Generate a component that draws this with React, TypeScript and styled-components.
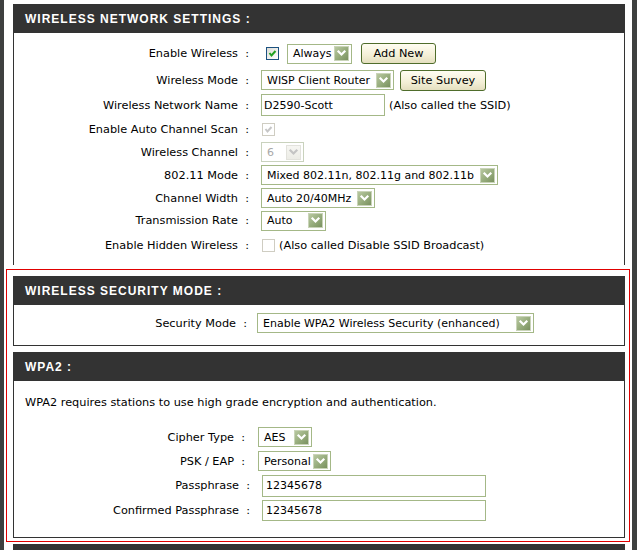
import React, { FC, ReactNode } from 'react'
import styled, { createGlobalStyle } from 'styled-components'

const GlobalStyle = createGlobalStyle`
  html, body {
    margin: 0;
    padding: 0;
    background: #3e403f;
  }
  body {
    font-family: "DejaVu Sans", Verdana, sans-serif;
    font-size: 11.3px;
    color: #000;
  }
`

const Page = styled.div`
  width: 628px;
  min-height: 550px;
  margin-left: 4px;
  padding: 4px 7px 0 9px;
  box-sizing: border-box;
  background: #fff;
  overflow: hidden;
`

const Box = styled.section<{ $open?: boolean; $top?: number }>`
  border: 1px solid #333;
  border-bottom: ${p => (p.$open ? 'none' : '1px solid #333')};
  margin-top: ${p => p.$top ?? 0}px;
  background: #fff;
`

const Header = styled.h2`
  margin: 0;
  height: 28px;
  line-height: 28px;
  padding-left: 11px;
  background: #333333;
  color: #fff;
  font-family: "Liberation Sans", Arial, sans-serif;
  font-size: 12px;
  font-weight: 700;
  letter-spacing: 1px;
`

const Content = styled.div<{ $pt: number; $pb: number }>`
  padding: ${p => p.$pt}px 0 ${p => p.$pb}px;
`

const SecurityFrame = styled.div`
  margin: 4px -5px 0 -7px;
  padding: 6px 4px 3px 6px;
  border: 1px solid #e00000;
`

const Row = styled.div<{ $h: number; $lw?: number; $gap?: number }>`
  display: grid;
  grid-template-columns: ${p => p.$lw ?? 235}px 1fr;
  column-gap: ${p => p.$gap ?? 12}px;
  align-items: center;
  height: ${p => p.$h}px;
`

const Label = styled.div`
  text-align: right;
  white-space: nowrap;
`

const Controls = styled.div`
  display: flex;
  align-items: center;
  white-space: nowrap;
`

const Note = styled.span`
  margin-left: 4px;
`

const Intro = styled.p`
  margin: 0 0 14px 11px;
  line-height: 16px;
`

const SelectBox = styled.div<{ $w: number; $disabled?: boolean; $ml?: number }>`
  display: inline-flex;
  align-items: center;
  justify-content: space-between;
  box-sizing: border-box;
  width: ${p => p.$w}px;
  height: 20px;
  margin-left: ${p => p.$ml ?? 0}px;
  padding-left: 5px;
  padding-right: 2px;
  border: 1px solid ${p => (p.$disabled ? '#c9d2bd' : '#a4b887')};
  background: #fff;
  font-size: 11px;
  color: ${p => (p.$disabled ? '#a8a8a8' : '#000')};
`

const ArrowBox = styled.span<{ $disabled?: boolean }>`
  display: inline-flex;
  align-items: center;
  justify-content: center;
  box-sizing: border-box;
  flex: none;
  width: 15px;
  height: 15px;
  border: 1px solid ${p => (p.$disabled ? '#e2e2dc' : '#c9d4b8')};
  background: ${p =>
    p.$disabled
      ? 'linear-gradient(#f6f6f2, #ecece6)'
      : 'linear-gradient(135deg, #b8c8a0 0%, #95ab7b 55%, #7a915f 100%)'};
`

const Arrow: FC<{ disabled?: boolean }> = ({ disabled }) => (
  <ArrowBox $disabled={disabled}>
    <svg width="11" height="11" viewBox="0 0 11 11">
      <polyline
        points="2.5,3.5 5.5,6.5 8.5,3.5"
        fill="none"
        stroke={disabled ? '#c4c4c4' : '#fff'}
        strokeWidth="2.2"
        strokeLinecap="square"
      />
    </svg>
  </ArrowBox>
)

const Select: FC<{ w: number; disabled?: boolean; ml?: number; children: ReactNode }> = ({
  w,
  disabled,
  ml,
  children,
}) => (
  <SelectBox $w={w} $disabled={disabled} $ml={ml}>
    <span>{children}</span>
    <Arrow disabled={disabled} />
  </SelectBox>
)

const Button = styled.button<{ $w: number; $ml: number }>`
  width: ${p => p.$w}px;
  height: 21px;
  margin-left: ${p => p.$ml}px;
  padding: 0;
  border: 1px solid #4f6d2b;
  border-radius: 3px;
  background: linear-gradient(#fffdf2, #f3efd6 60%, #e4dfbf);
  font-family: "DejaVu Sans", Verdana, sans-serif;
  font-size: 11.3px;
  color: #000;
`

const TextInput = styled.div<{ $w: number; $h: number; $pl: number }>`
  display: inline-flex;
  align-items: center;
  box-sizing: border-box;
  width: ${p => p.$w}px;
  height: ${p => p.$h}px;
  padding-left: ${p => p.$pl}px;
  border: 1px solid #a4b887;
  background: #fff;
  font-size: 11px;
`

const CheckBox = styled.span<{ $disabled?: boolean; $ml: number }>`
  display: inline-flex;
  box-sizing: border-box;
  width: 13px;
  height: 13px;
  margin-left: ${p => p.$ml}px;
  border: 1px solid ${p => (p.$disabled ? '#cfcdc2' : '#1c5180')};
  background: ${p => (p.$disabled ? '#fff' : 'linear-gradient(135deg, #dcdcd6, #fff)')};
`

const Check: FC<{ checked?: boolean; disabled?: boolean; ml?: number }> = ({ checked, disabled, ml = 1 }) => (
  <CheckBox $disabled={disabled} $ml={ml}>
    {checked && (
      <svg width="11" height="11" viewBox="0 0 11 11">
        <polyline
          points="2.5,5 4.5,7.5 8.5,3"
          fill="none"
          stroke={disabled ? '#c6c6c6' : '#21a121'}
          strokeWidth="2"
        />
      </svg>
    )}
  </CheckBox>
)

export default function App() {
  return (
    <>
      <GlobalStyle />
      <Page>
        <Box $open>
          <Header>WIRELESS NETWORK SETTINGS :</Header>
          <Content $pt={7} $pb={7}>
            <Row $h={27}>
              <Label>Enable Wireless&nbsp; :</Label>
              <Controls>
                <Check checked ml={5} />
                <Select w={65} ml={8}>Always</Select>
                <Button $w={75} $ml={9}>Add New</Button>
              </Controls>
            </Row>
            <Row $h={26}>
              <Label>Wireless Mode&nbsp; :</Label>
              <Controls>
                <Select w={133}>WISP Client Router</Select>
                <Button $w={86} $ml={6}>Site Survey</Button>
              </Controls>
            </Row>
            <Row $h={24}>
              <Label>Wireless Network Name&nbsp; :</Label>
              <Controls>
                <TextInput $w={124} $h={22} $pl={2}>D2590-Scott</TextInput>
                <Note>(Also called the SSID)</Note>
              </Controls>
            </Row>
            <Row $h={24}>
              <Label>Enable Auto Channel Scan&nbsp; :</Label>
              <Controls>
                <Check checked disabled />
              </Controls>
            </Row>
            <Row $h={22}>
              <Label>Wireless Channel&nbsp; :</Label>
              <Controls>
                <Select w={43} disabled>6</Select>
              </Controls>
            </Row>
            <Row $h={24}>
              <Label>802.11 Mode&nbsp; :</Label>
              <Controls>
                <Select w={237}>Mixed 802.11n, 802.11g and 802.11b</Select>
              </Controls>
            </Row>
            <Row $h={22}>
              <Label>Channel Width&nbsp; :</Label>
              <Controls>
                <Select w={114}>Auto 20/40MHz</Select>
              </Controls>
            </Row>
            <Row $h={23}>
              <Label>Transmission Rate&nbsp; :</Label>
              <Controls>
                <Select w={65}>Auto</Select>
              </Controls>
            </Row>
            <Row $h={26}>
              <Label>Enable Hidden Wireless&nbsp; :</Label>
              <Controls>
                <Check disabled />
                <Note>(Also called Disable SSID Broadcast)</Note>
              </Controls>
            </Row>
          </Content>
        </Box>

        <SecurityFrame>
          <Box>
            <Header>WIRELESS SECURITY MODE :</Header>
            <Content $pt={6} $pb={10}>
              <Row $h={24} $lw={233} $gap={10}>
                <Label>Security Mode&nbsp; :</Label>
                <Controls>
                  <Select w={277}>Enable WPA2 Wireless Security (enhanced)</Select>
                </Controls>
              </Row>
            </Content>
          </Box>

          <Box $top={6}>
            <Header>WPA2 :</Header>
            <Content $pt={14} $pb={15}>
              <Intro>WPA2 requires stations to use high grade encryption and authentication.</Intro>
              <Row $h={24} $lw={231} $gap={13}>
                <Label>Cipher Type&nbsp; :</Label>
                <Controls>
                  <Select w={54}>AES</Select>
                </Controls>
              </Row>
              <Row $h={24} $lw={231} $gap={13}>
                <Label>PSK / EAP&nbsp; :</Label>
                <Controls>
                  <Select w={73}>Personal</Select>
                </Controls>
              </Row>
              <Row $h={25} $lw={236} $gap={12}>
                <Label>Passphrase&nbsp; :</Label>
                <Controls>
                  <TextInput $w={224} $h={22} $pl={3}>12345678</TextInput>
                </Controls>
              </Row>
              <Row $h={24} $lw={236} $gap={12}>
                <Label>Confirmed Passphrase&nbsp; :</Label>
                <Controls>
                  <TextInput $w={224} $h={21} $pl={3}>12345678</TextInput>
                </Controls>
              </Row>
            </Content>
          </Box>
        </SecurityFrame>

        <Box $top={2}>
          <Header>&nbsp;</Header>
        </Box>
      </Page>
    </>
  )
}
